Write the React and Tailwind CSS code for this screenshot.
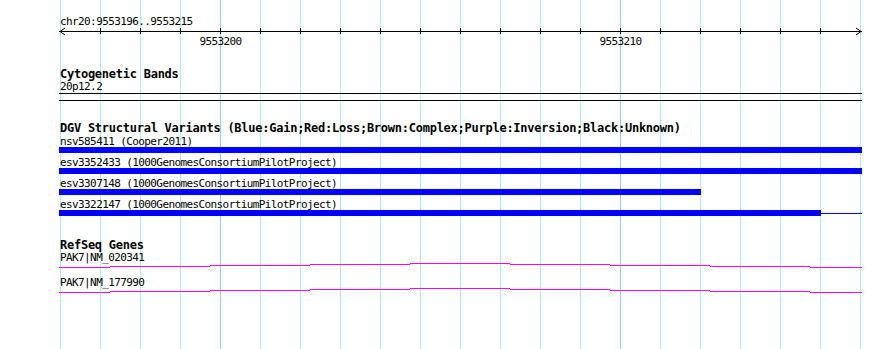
import React from "react";

const gridLines = Array.from({ length: 21 }, (_, i) => 60 + i * 40);
const majorLines = [220, 620];

// intron "hat" of a RefSeq gene, drawn as 1px steps (x relative to track start)
const geneSteps = [
  [0, 51, 4],
  [51, 151, 3],
  [151, 251, 2],
  [251, 351, 1],
  [351, 451, 0],
  [451, 551, 1],
  [551, 651, 2],
  [651, 751, 3],
  [751, 803, 4],
];

const variants = [
  { label: "nsv585411 (Cooper2011)", width: "w-[803px]" },
  { label: "esv3352433 (1000GenomesConsortiumPilotProject)", width: "w-[803px]" },
  { label: "esv3307148 (1000GenomesConsortiumPilotProject)", width: "w-[642px]" },
  { label: "esv3322147 (1000GenomesConsortiumPilotProject)", width: "w-[762px]", tail: true },
];

const genes = ["PAK7|NM_020341", "PAK7|NM_177990"];

const Ruler = () => (
  <svg width="803" height="21" className="block overflow-visible" shapeRendering="crispEdges">
    <rect x="0" y="4" width="803" height="1" fill="#000" />
    {gridLines.slice(1, 20).map((x) => (
      <rect key={x} x={x - 59} y="1" width="1" height="6" fill="#000" />
    ))}
    <path d="M6 1 L1 4.5 L6 8" fill="none" stroke="#000" strokeWidth="1" shapeRendering="auto" />
    <path d="M797 1 L802 4.5 L797 8" fill="none" stroke="#000" strokeWidth="1" shapeRendering="auto" />
    <text x="161.5" y="17.5" textAnchor="middle" fill="#000" fontSize="11">
      9553200
    </text>
    <text x="561.5" y="17.5" textAnchor="middle" fill="#000" fontSize="11">
      9553210
    </text>
  </svg>
);

const GeneLine = () => (
  <svg width="803" height="5" className="block" shapeRendering="crispEdges">
    {geneSteps.map(([x1, x2, y]) => (
      <rect key={x1} x={x1} y={y} width={x2 - x1} height="1" fill="#ff00ff" />
    ))}
  </svg>
);

const App = () => {
  return (
    <div className="relative w-[890px] h-[349px] overflow-hidden bg-white text-black font-['DejaVu_Sans_Mono',monospace] text-[11px] tracking-[-0.6px]">
      <svg
        className="absolute inset-0"
        width="890"
        height="349"
        shapeRendering="crispEdges"
      >
        {gridLines.map((x) => (
          <rect
            key={x}
            x={x}
            y="0"
            width="1"
            height="349"
            fill={majorLines.includes(x) ? "#86d3ec" : "#a9eef2"}
          />
        ))}
      </svg>

      <div className="relative flex flex-col pl-[59px] pt-[15px] w-[862px]">
        <div className="h-[12px] leading-[13px] pl-px whitespace-nowrap">
          chr20:9553196..9553215
        </div>
        <Ruler />

        <div className="mt-[19px] h-[13px] leading-[15px] pl-px text-[12px] font-bold tracking-[-0.25px]">
          Cytogenetic Bands
        </div>
        <div className="h-[13px] leading-[13px] pl-px">20p12.2</div>
        <div className="h-[8px] border-y border-black" />

        <div className="mt-[20px] h-[14px] leading-[15px] pl-px text-[12px] font-bold tracking-[-0.25px] whitespace-nowrap">
          DGV Structural Variants (Blue:Gain;Red:Loss;Brown:Complex;Purple:Inversion;Black:Unknown)
        </div>
        <div className="flex flex-col gap-[3px]">
          {variants.map((v) => (
            <div key={v.label} className="flex flex-col">
              <div className="h-[12px] leading-[13px] pl-px whitespace-nowrap">{v.label}</div>
              <div className="flex items-center h-[6px]">
                <div className={`${v.width} h-[6px] bg-[#0000ff]`} />
                {v.tail && <div className="flex-1 h-px bg-[#0000ff]" />}
              </div>
            </div>
          ))}
        </div>

        <div className="mt-[22px] h-[13px] leading-[15px] pl-px text-[12px] font-bold tracking-[-0.25px]">
          RefSeq Genes
        </div>
        <div className="flex flex-col gap-[8px]">
          {genes.map((g) => (
            <div key={g} className="flex flex-col">
              <div className="h-[12px] leading-[13px] pl-px whitespace-nowrap">{g}</div>
              <GeneLine />
            </div>
          ))}
        </div>
      </div>
    </div>
  );
};

export default App;
